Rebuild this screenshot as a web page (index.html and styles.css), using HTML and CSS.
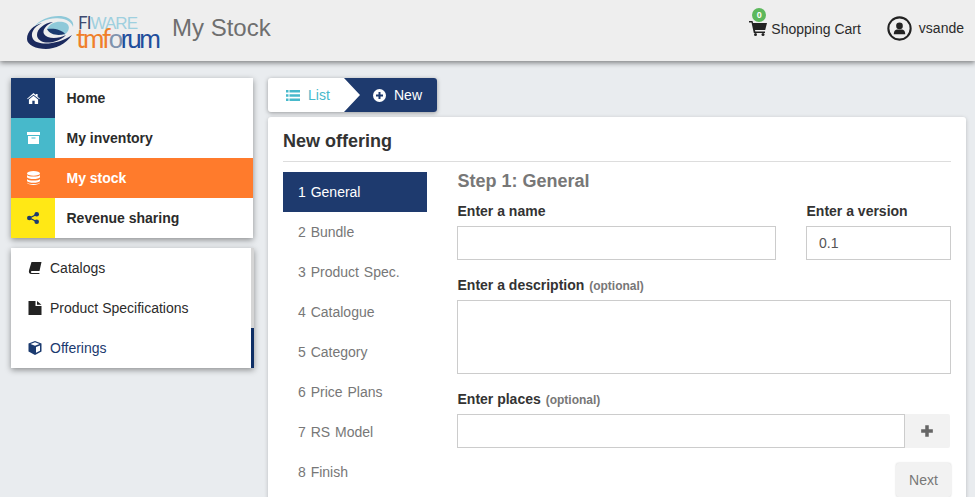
FILE: index.html
```html
<!DOCTYPE html>
<html lang="en">
<head>
  <meta charset="UTF-8">
  <title>My Stock</title>
  <link rel="stylesheet" href="styles.css">
</head>
<body>
  <header class="topbar">
    <div class="brand">
      <svg class="logo" width="136" height="44" viewBox="26 6 136 44">
        <path d="M27 36C27 28 34 22 42 20C33 24 30 31 33 36C37 43 58 42 72 32C66 41 55 46 46 46C36 46 27 42 27 36Z" fill="#1b2a5e"/>
        <path d="M34 24C40 15 58 10 68 15C72 17 74 20 73 24C72 19 66 16 60 15.500C50 14 40 18 34 24Z" fill="#8fc9d9"/>
        <path d="M37 32C37 26 44 20 53 19C46 22 42 27 44 31C47 36 58 36 66 32C60 38 52 40 46 39.500C41 39 37 36 37 32Z" fill="#1b2a5e"/>
        <path d="M47 26C50 19 60 17 66 20C71 23 69 29 64 32C64 29 58 26 47 26Z" fill="#8fc9d9"/>
        <path d="M47 26C55 25 62 27 65 31C58 33 50 32 47 26Z" fill="#1b3b6f"/>
        <text x="78" y="26" class="logo-fi" textLength="60">FI<tspan class="logo-ware">WARE</tspan></text>
        <text x="76" y="45" class="logo-tm" textLength="85">tmf<tspan class="logo-o">o</tspan><tspan class="logo-forum">rum</tspan></text>
      </svg>
      <span class="brand-title">My Stock</span>
    </div>
    <nav class="topbar-right">
      <a class="cart">
        <svg class="cart-icon" width="18" height="16" viewBox="0 0 18 16"><path d="M0 1h3.500l.6 2H18l-1.800 7H6l.3 1.500H16V13H4.800L2.500 2.500H0Z" fill="#222"/><circle cx="6.500" cy="14.500" r="1.500" fill="#222"/><circle cx="14" cy="14.500" r="1.500" fill="#222"/></svg>
        <span class="badge">0</span>
        Shopping Cart
      </a>
      <a class="user">
        <svg width="25" height="25" viewBox="0 0 24 24"><circle cx="12" cy="12" r="10.700" fill="none" stroke="#222" stroke-width="2"/><circle cx="12" cy="9.500" r="3.200" fill="#222"/><path d="M6.500 17.500c0-3.500 2-4.500 3.500-4.500h4c1.500 0 3.500 1 3.500 4.500Z" fill="#222"/></svg>
        vsande
      </a>
    </nav>
  </header>

  <div class="page">
    <aside class="sidebar">
      <ul class="main-menu">
        <li class="menu-item">
          <span class="menu-icon navy"><svg width="13" height="11" viewBox="0 0 14 12"><path d="M7 0l2.500 2.200V1h2v3l2.500 2.200-.6.7L7 1.800 .6 6.900 0 6.200Z" fill="#fff"/><path d="M7 3l5 4v5H8.300V8.500H5.700V12H2V7Z" fill="#fff"/></svg></span>
          Home
        </li>
        <li class="menu-item">
          <span class="menu-icon teal"><svg width="13" height="12" viewBox="0 0 13 12"><path d="M0 0h13v3H0ZM1 4h11v8H1Z" fill="#fff"/><path d="M4.500 5.500h4v1h-4Z" fill="#47b9cb"/></svg></span>
          My inventory
        </li>
        <li class="menu-item active">
          <span class="menu-icon orange"><svg width="13" height="14" viewBox="0 0 13 14"><ellipse cx="6.500" cy="2.400" rx="6.500" ry="2.400" fill="#fff"/><path d="M0 4c1 2 12 2 13 0v2.200c-1 2.400-12 2.400-13 0ZM0 8c1 2 12 2 13 0v2c-1 2.400-12 2.400-13 0ZM0 11.500c1 2 12 2 13 0v.3c-1 2.800-12 2.800-13 0Z" fill="#fff"/></svg></span>
          My stock
        </li>
        <li class="menu-item">
          <span class="menu-icon yellow"><svg width="12" height="12" viewBox="0 0 12 12"><path d="M9.500 2.500 2.500 6l7 3.500" fill="none" stroke="#1b3a6f" stroke-width="1.300"/><circle cx="9.700" cy="2.300" r="2.300" fill="#1b3a6f"/><circle cx="2.300" cy="6" r="2.300" fill="#1b3a6f"/><circle cx="9.700" cy="9.700" r="2.300" fill="#1b3a6f"/></svg></span>
          Revenue sharing
        </li>
      </ul>
      <ul class="sub-menu">
        <li class="sub-item">
          <svg width="14" height="12" viewBox="0 0 13 12"><path d="M3 0h10L11 9H3.500C2 9 2 11 3.500 11H11l-.2 1H3C.5 12 0 10 .6 8Z" fill="#222"/></svg>
          Catalogs
        </li>
        <li class="sub-item">
          <svg width="14" height="14" viewBox="0 0 13 14"><path d="M0 0h7v5h6v9H0ZM8.500 0 13 3.800H8.500Z" fill="#222"/></svg>
          Product Specifications
        </li>
        <li class="sub-item current">
          <svg width="14" height="14" viewBox="0 0 14 14"><path d="M7 0l6.500 2.600v8L7 14 .5 10.600v-8Z" fill="#1b3a6f"/><path d="M2.500 3 7 1.300 11.500 3 7 4.800ZM8 6l4-1.600v5.300L8 11.800Z" fill="#fff"/></svg>
          Offerings
        </li>
      </ul>
    </aside>

    <main class="content">
      <div class="tabs">
        <a class="tab">
          <svg width="14" height="11" viewBox="0 0 14 11"><path d="M0 0h2.500v2.500H0ZM3.500 0H14v2.500H3.500ZM0 4.200h2.500v2.500H0ZM3.500 4.200H14v2.500H3.500ZM0 8.400h2.500v2.600H0ZM3.500 8.400H14V11H3.500Z" fill="#47b9cb"/></svg>
          List
        </a>
        <a class="tab selected">
          <svg width="13" height="13" viewBox="0 0 13 13"><circle cx="6.500" cy="6.500" r="6.500" fill="#fff"/><path d="M5.500 3h2v2.500H10v2H7.500V10h-2V7.500H3v-2h2.500Z" fill="#1e3a6e"/></svg>
          New
        </a>
      </div>

      <section class="card">
        <h2 class="card-title">New offering</h2>
        <div class="wizard">
          <ol class="steps">
            <li class="step current">1 General</li>
            <li class="step">2 Bundle</li>
            <li class="step">3 Product Spec.</li>
            <li class="step">4 Catalogue</li>
            <li class="step">5 Category</li>
            <li class="step">6 Price Plans</li>
            <li class="step">7 RS Model</li>
            <li class="step">8 Finish</li>
          </ol>
          <form class="step-form">
            <h3 class="step-title">Step 1: General</h3>
            <div class="row">
              <div class="field grow">
                <label>Enter a name</label>
                <input type="text">
              </div>
              <div class="field version">
                <label>Enter a version</label>
                <input type="text" value="0.1">
              </div>
            </div>
            <div class="field">
              <label>Enter a description <small>(optional)</small></label>
              <textarea></textarea>
            </div>
            <div class="field">
              <label>Enter places <small>(optional)</small></label>
              <div class="input-group">
                <input type="text">
                <button type="button" class="add-btn">
                  <svg width="14" height="14" viewBox="0 0 12 12"><path d="M4.500 1h3v3.500H11v3H7.500V11h-3V7.500H1v-3h3.500Z" fill="#666"/></svg>
                </button>
              </div>
            </div>
            <div class="actions">
              <button type="button" class="next-btn">Next</button>
            </div>
          </form>
        </div>
      </section>
    </main>
  </div>
</body>
</html>
```

FILE: styles.css
```css
* {
  margin: 0;
  padding: 0;
  box-sizing: border-box;
  font-family: 'Liberation Sans', Arial, sans-serif;
}

html, body {
  height: 497px;
  overflow: hidden;
}

body {
  background: #e9ecef;
  color: #2b2b2b;
  font-size: 14px;
}

ul, ol {
  list-style: none;
}

svg {
  flex: none;
}

.topbar {
  height: 61px;
  background: #eeeeee;
  box-shadow: 0 2px 5px rgba(0, 0, 0, 0.45);
  display: flex;
  justify-content: space-between;
  align-items: center;
  padding: 0 11px 5px 26px;
}

.brand {
  display: flex;
  align-items: center;
  gap: 10px;
}

.logo {
  display: block;
  margin-top: 5px;
}

.logo text {
  font-family: Lato, 'Liberation Sans', sans-serif;
}

.logo-fi {
  font-size: 17px;
  fill: #3f4a70;
}

.logo-ware {
  font-weight: 300;
  fill: #9fd0df;
}

.logo-tm {
  font-size: 26px;
  fill: #f07f2a;
}

.logo-o {
  fill: #7f93ad;
}

.logo-forum {
  fill: #1f4e9c;
}

.brand-title {
  font-size: 24px;
  color: #6f6f6f;
}

.topbar-right {
  display: flex;
  align-items: center;
  gap: 26px;
}

.cart {
  position: relative;
  display: flex;
  align-items: center;
  gap: 4px;
  padding-top: 1px;
}

.cart-icon {
  margin-top: -1px;
}

.badge {
  position: absolute;
  top: -12px;
  left: 3px;
  width: 14px;
  height: 14px;
  border-radius: 50%;
  background: #5cb85c;
  color: #fff;
  font-size: 9px;
  font-weight: bold;
  line-height: 14px;
  text-align: center;
}

.user {
  display: flex;
  align-items: center;
  gap: 7px;
}

.page {
  display: flex;
  gap: 15px;
  padding: 17px 9px 0 11px;
}

.sidebar {
  width: 242px;
  flex: none;
}

.main-menu {
  background: #fff;
  box-shadow: 0 2px 6px rgba(0, 0, 0, 0.4);
  margin-bottom: 10px;
}

.menu-item {
  height: 40px;
  display: flex;
  align-items: center;
  gap: 12px;
  font-weight: bold;
}

.menu-item.active {
  background: #ff7b2c;
  color: #fff;
}

.menu-icon {
  width: 44px;
  height: 40px;
  display: flex;
  align-items: center;
  justify-content: center;
  margin-right: -0.5px;
}

.navy { background: #1b3a6f; }
.teal { background: #47b9cb; }
.orange { background: #ff7b2c; }
.yellow { background: #ffe815; }

.sub-menu {
  background: #fff;
  width: 243px;
  border-right: 3px solid #d5d5d5;
  box-shadow: 0 2px 6px rgba(0, 0, 0, 0.4);
}

.sub-item {
  height: 40px;
  display: flex;
  align-items: center;
  gap: 8px;
  padding-left: 17px;
}

.sub-item.current {
  color: #1b3a6f;
  position: relative;
}

.sub-item.current::after {
  content: '';
  position: absolute;
  top: 0;
  right: -3px;
  width: 3px;
  height: 40px;
  background: #0f2f66;
}

.content {
  flex: 1;
}

.tabs {
  display: inline-flex;
  height: 34px;
  background: #fff;
  border-radius: 3px;
  box-shadow: 0 1px 4px rgba(0, 0, 0, 0.35);
  margin-bottom: 5px;
  vertical-align: top;
}

.tab {
  display: flex;
  align-items: center;
  gap: 8px;
  padding-left: 18px;
  color: #47b9cb;
  width: 76px;
}

.tab.selected {
  width: 93px;
  padding-left: 29px;
  color: #fff;
  background: #1e3a6e;
  border-radius: 0 3px 3px 0;
  clip-path: polygon(0 0, 100% 0, 100% 100%, 0 100%, 16px 50%);
}

.card {
  display: block;
  background: #fff;
  border-radius: 3px;
  box-shadow: 0 1px 4px rgba(0, 0, 0, 0.2);
  padding: 0 15px;
  height: 400px;
}

.card-title {
  height: 45px;
  font-size: 18px;
  line-height: 48px;
  color: #333;
  border-bottom: 1px solid #ddd;
  margin-bottom: 10px;
}

.wizard {
  display: flex;
  gap: 30px;
}

.steps {
  width: 144px;
  flex: none;
}

.step {
  height: 40px;
  line-height: 40px;
  padding-left: 15px;
  color: #777;
  word-spacing: 1px;
}

.step.current {
  background: #1e3a6e;
  color: #fff;
}

.step-form {
  flex: 1;
  min-width: 0;
}

.step-title {
  font-size: 18px;
  line-height: 18px;
  color: #777;
  margin-bottom: 11px;
  padding-left: 0.5px;
}

.row {
  display: flex;
  gap: 30px;
}

.grow {
  flex: 1;
}

.version {
  width: 145px;
  flex: none;
}

.field {
  margin-bottom: 15px;
}

.field label {
  display: block;
  font-weight: bold;
  line-height: 20px;
  margin-bottom: 5px;
  padding-left: 0.5px;
  color: #333;
}

.field small {
  font-size: 12px;
  line-height: 1;
  color: #777;
  margin-left: 1px;
}

input, textarea {
  display: block;
  width: 100%;
  border: 1px solid #ccc;
  background: #fff;
  padding: 0 12px;
  font-size: 14px;
  color: #555;
}

input {
  height: 34px;
}

textarea {
  height: 74px;
  resize: none;
}

.input-group {
  display: flex;
  margin-right: 1px;
}

.input-group input {
  flex: 1;
}

.add-btn {
  width: 45px;
  height: 34px;
  border: none;
  background: #f2f2f2;
  display: flex;
  align-items: center;
  justify-content: center;
  padding-right: 2px;
  border-radius: 0 2px 2px 0;
}

.actions {
  display: flex;
  justify-content: flex-end;
}

.next-btn {
  width: 55px;
  height: 34px;
  border: none;
  background: #f2f2f2;
  border-radius: 3px;
  color: #777;
  font-size: 14px;
  box-shadow: 0 0 2px rgba(0, 0, 0, 0.2);
}
```
